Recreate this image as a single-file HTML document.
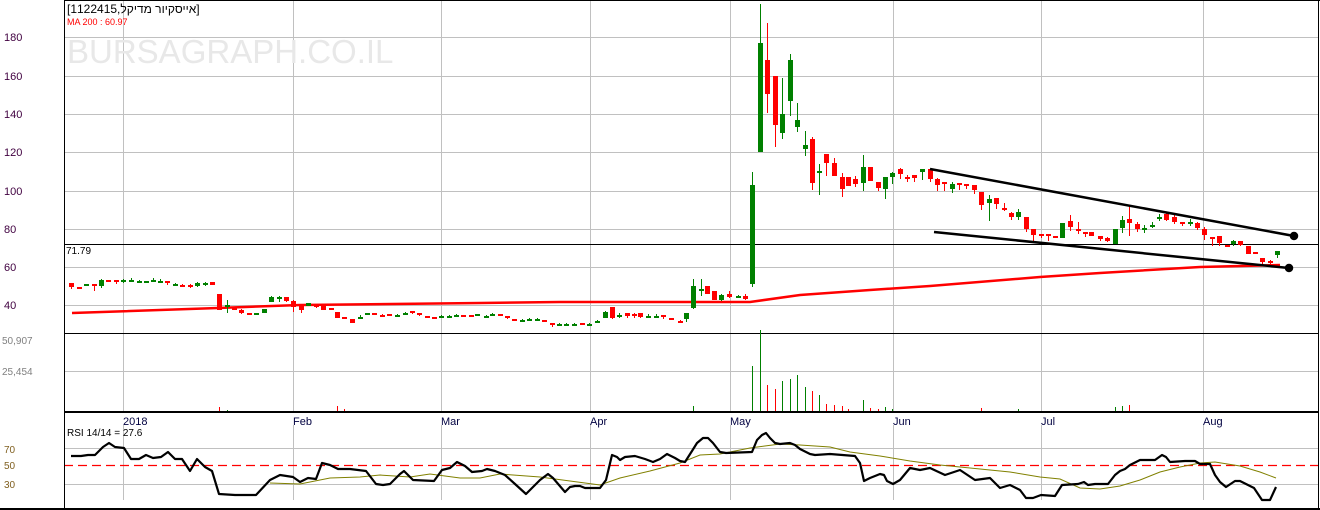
<!DOCTYPE html>
<html><head><meta charset="utf-8"><style>
html,body{margin:0;padding:0;background:#fff;width:1320px;height:510px;overflow:hidden}
svg{display:block}
text{font-family:"Liberation Sans","Noto Sans CJK JP",sans-serif}
</style></head><body>
<svg id="s" width="1320" height="510" viewBox="0 0 1320 510" xmlns="http://www.w3.org/2000/svg">
<rect width="1320" height="510" fill="#fff"/>
<g stroke="#c0c0c0" stroke-width="1">
<line x1="64" y1="37.5" x2="1318" y2="37.5"/><line x1="64" y1="76.5" x2="1318" y2="76.5"/>
<line x1="64" y1="114.5" x2="1318" y2="114.5"/><line x1="64" y1="152.5" x2="1318" y2="152.5"/>
<line x1="64" y1="191.5" x2="1318" y2="191.5"/><line x1="64" y1="229.5" x2="1318" y2="229.5"/>
<line x1="64" y1="267.5" x2="1318" y2="267.5"/><line x1="64" y1="305.5" x2="1318" y2="305.5"/>
<line x1="64" y1="371.5" x2="1318" y2="371.5"/>
<line x1="64" y1="448.5" x2="1318" y2="448.5"/><line x1="64" y1="484.5" x2="1318" y2="484.5"/>
<line x1="123.5" y1="0" x2="123.5" y2="412"/><line x1="293.5" y1="0" x2="293.5" y2="412"/>
<line x1="441.5" y1="0" x2="441.5" y2="412"/><line x1="590.5" y1="0" x2="590.5" y2="412"/>
<line x1="730.5" y1="0" x2="730.5" y2="412"/><line x1="893.5" y1="0" x2="893.5" y2="412"/>
<line x1="1041.5" y1="0" x2="1041.5" y2="412"/><line x1="1203.5" y1="0" x2="1203.5" y2="412"/>
<line x1="123.5" y1="425" x2="123.5" y2="500"/><line x1="293.5" y1="425" x2="293.5" y2="500"/>
<line x1="441.5" y1="425" x2="441.5" y2="500"/><line x1="590.5" y1="425" x2="590.5" y2="500"/>
<line x1="730.5" y1="425" x2="730.5" y2="500"/><line x1="893.5" y1="425" x2="893.5" y2="500"/>
<line x1="1041.5" y1="425" x2="1041.5" y2="500"/><line x1="1203.5" y1="425" x2="1203.5" y2="500"/>
</g>
<text x="67" y="63" font-size="33" fill="#e8e8e8">BURSAGRAPH.CO.IL</text>
<line x1="64" y1="465.5" x2="1318" y2="465.5" stroke="#ff0000" stroke-width="1.3" stroke-dasharray="9,5"/>
<g stroke="#000">
<line x1="64" y1="0.5" x2="1320" y2="0.5"/>
<line x1="64.5" y1="0" x2="64.5" y2="509"/>
<line x1="1318.5" y1="0" x2="1318.5" y2="509"/>
<line x1="64" y1="244.5" x2="1318" y2="244.5"/>
<line x1="64" y1="333.5" x2="1318" y2="333.5"/>
<line x1="64" y1="412" x2="1318" y2="412" stroke-width="2"/>
<line x1="0" y1="509" x2="1320" y2="509" stroke-width="2"/>
</g>
<polyline fill="none" stroke="#ff0000" stroke-width="2.5" points="72,313 218,308 300,305 480,303 560,302 750,302 800,295 870,290 930,286 1040,277 1100,273 1200,267 1280,265"/>
<g id="c"></g>
<g stroke="#000" stroke-width="2.5" fill="#000">
<line x1="930" y1="169" x2="1294" y2="236"/><line x1="934" y1="232" x2="1289" y2="268"/>
<circle cx="1294" cy="236" r="3"/><circle cx="1289" cy="268" r="3"/>
</g>
<polyline fill="none" stroke="#808000" stroke-width="1" points="270,483 300,484 330,478 360,477 380,475 410,477 430,474 460,478 480,478 500,474 540,477 600,485 620,478 650,471 680,463 700,455 720,454 750,448 780,444 800,445 830,447 850,452 880,456 910,461 940,465 980,469 1010,472 1040,477 1060,479 1080,488 1100,489 1120,486 1140,480 1160,472 1180,467 1200,463 1215,462 1240,466 1260,472 1276,478"/>
<polyline fill="none" stroke="#000" stroke-width="2.2" stroke-linejoin="round" points="71,456 81,456 88,455 95,455 103,447 109,443 115,447 124,448 131,459 139,459 146,455 153,458 161,457 168,452 175,459 182,459 190,471 197,459 205,467 212,471 219,494 235,495 256,495 270,480 280,475 293,477 300,482 308,478 316,479 322,463 330,465 338,469 350,469 366,471 376,484 383,485 390,484 400,474 404,471 413,480 434,481 442,470 450,468 457,462 465,466 472,472 482,471 487,469 495,471 505,475 515,484 526,494 540,480 548,474 553,478 565,492 570,487 575,486 580,486 585,488 600,488 606,480 612,455 617,457 620,460 625,457 635,456 645,459 653,462 660,459 667,454 675,458 680,461 685,462 692,451 697,443 703,438 708,438 713,443 720,452 726,453 752,452 757,440 762,435 766,433 770,438 775,443 780,444 790,443 795,445 800,449 810,454 815,455 830,454 855,456 860,463 864,481 870,478 880,474 884,475 887,481 893,484 900,480 910,468 920,470 930,468 945,475 960,470 975,480 990,478 1000,488 1010,485 1020,490 1026,498 1033,498 1041,495 1055,496 1062,485 1078,484 1084,482 1088,485 1095,484 1108,484 1115,475 1120,471 1125,469 1130,465 1140,460 1155,460 1162,455 1166,457 1170,462 1185,461 1195,461 1200,464 1210,464 1215,475 1220,482 1226,487 1235,481 1240,481 1250,486 1254,488 1262,500 1270,500 1276,487"/>
<g font-size="11" fill="#400040">
<text x="4" y="41">180</text><text x="4" y="80">160</text><text x="4" y="118">140</text><text x="4" y="156">120</text><text x="4" y="195">100</text><text x="4" y="233">80</text><text x="4" y="271">60</text><text x="4" y="309">40</text>
</g>
<g font-size="10" fill="#808080"><text x="2" y="344">50,907</text><text x="2" y="375">25,454</text></g>
<g font-size="10" fill="#806020"><text x="4" y="453">70</text><text x="4" y="469">50</text><text x="4" y="488">30</text></g>
<text x="66" y="254" font-size="10" fill="#000">71.79</text>
<g font-size="11" fill="#000040"><text x="123" y="425">2018</text><text x="293" y="425">Feb</text><text x="441" y="425">Mar</text><text x="590" y="425">Apr</text><text x="730" y="425">May</text><text x="893" y="425">Jun</text><text x="1041" y="425">Jul</text><text x="1203" y="425">Aug</text></g>
<text x="67" y="436" font-size="10" fill="#000">RSI 14/14 = 27.6</text>
<text x="67" y="13" font-size="12" fill="#000">[1122415,אייסקיור מדיקל]</text>
<text x="67" y="25" font-size="9" fill="#ff0000">MA 200 : 60.97</text>
</svg>
<script>
var D="71,283,287,283,289,r 79,287,288,287,288,r 86,284,286,284,286,g 94,284,286,284,291,r 101,280,286,279,288,g 108,280,281,280,281,r 116,280,282,280,284,r 123,280,282,279,283,g 131,280,281,278,282,g 139,281,282,280,282,g 146,281,282,281,282,g 153,280,281,278,282,g 160,281,282,279,283,g 167,281,282,281,285,r 175,284,285,283,286,g 182,285,286,284,286,r 190,285,287,284,288,r 197,283,286,282,287,g 205,283,284,282,286,g 212,282,285,282,285,r 219,294,310,294,310,r 227,305,306,300,313,g 234,308,310,307,310,r 241,310,313,309,314,r 249,313,314,313,314,r 256,313,314,313,314,g 264,309,313,309,313,g 271,297,302,296,302,g 279,297,298,296,302,g 286,297,301,297,302,r 293,301,307,300,312,r 301,305,310,304,313,r 308,303,306,303,306,g 316,305,306,305,308,r 323,306,310,306,310,r 331,308,309,308,310,r 337,312,318,312,318,r 344,317,318,317,318,r 352,319,323,319,323,r 360,317,318,315,319,g 367,313,314,313,314,g 374,313,314,313,314,r 382,315,316,314,317,r 389,314,315,314,315,r 397,315,316,314,317,g 405,313,314,312,315,g 412,311,313,311,314,r 419,313,314,313,316,r 427,316,317,316,318,r 434,317,318,317,318,r 441,316,317,315,318,g 449,316,317,315,318,g 456,315,316,314,317,g 463,315,316,315,316,r 471,315,316,315,316,r 477,314,315,314,316,g 486,316,317,315,318,g 492,314,315,313,316,g 500,314,316,314,316,r 507,316,318,316,319,r 514,319,320,319,320,r 522,320,321,319,321,g 529,319,320,318,321,g 537,319,320,318,321,g 544,320,321,320,321,r 552,323,325,323,327,r 559,324,325,323,325,g 566,324,325,323,325,g 574,324,325,323,325,g 582,323,324,323,325,r 589,324,325,323,325,g 597,321,322,320,323,g 605,312,318,311,318,g 612,307,318,307,319,r 619,315,316,313,318,g 627,313,316,313,318,r 634,314,315,313,318,r 640,313,317,313,318,r 648,316,317,314,318,g 656,316,317,314,318,g 663,315,317,315,319,r 671,318,319,318,319,r 680,321,322,320,322,r 686,313,319,313,322,g 693,286,308,279,309,g 701,289,290,279,296,g 707,286,294,286,294,r 714,291,300,291,300,r 721,295,300,294,301,g 729,294,297,291,298,r 738,296,297,295,298,g 745,296,299,294,300,r 752,185,284,172,287,g 760,43,152,4,152,g 767,60,94,23,113,r 775,76,125,76,147,r 782,114,133,78,139,g 790,60,101,54,116,g 797,120,127,103,132,g 805,145,149,131,156,g 812,139,183,137,190,r 819,171,172,164,195,g 826,154,163,154,176,r 834,163,176,158,176,r 842,177,189,173,197,r 848,177,186,177,186,r 855,179,184,176,187,r 863,167,183,155,191,g 870,167,181,167,181,r 878,182,188,182,191,r 885,177,189,177,199,g 892,173,177,172,184,g 900,169,174,168,179,r 907,177,178,175,182,r 914,175,178,175,182,r 922,169,172,169,180,g 930,169,179,169,182,r 937,179,185,178,191,r 944,182,184,182,191,r 952,184,189,182,193,g 959,183,184,183,190,r 966,184,186,184,189,r 974,185,190,185,194,r 981,192,205,192,210,r 989,199,203,195,221,g 996,198,204,198,209,r 1004,208,209,203,211,r 1011,213,217,212,220,r 1018,212,217,209,220,g 1026,217,229,217,232,r 1033,229,235,229,242,r 1041,234,235,234,238,r 1048,234,235,234,241,r 1055,236,238,236,238,r 1062,223,238,223,238,g 1070,221,227,215,231,r 1078,229,230,222,234,r 1085,232,233,232,237,r 1091,232,236,232,236,r 1100,236,239,236,241,r 1107,238,241,237,242,r 1115,229,244,229,244,g 1122,220,228,216,233,g 1129,219,223,206,236,r 1137,224,229,222,232,r 1144,228,229,225,233,g 1152,225,227,222,228,g 1159,217,218,214,221,g 1166,214,220,213,221,r 1174,217,222,215,224,r 1182,222,223,222,226,r 1190,222,223,219,226,g 1197,223,228,222,230,r 1204,229,235,227,240,r 1212,237,238,237,246,r 1219,236,243,236,246,r 1227,245,246,245,247,r 1233,241,244,240,246,g 1240,241,245,241,246,r 1248,246,254,246,254,r 1255,252,253,252,254,r 1262,258,262,258,264,r 1270,261,262,260,264,r 1277,251,255,251,258,g";
var V={685:404,693:406,702:409,708:409,722:410,752:366,760:330,767:385,775:389,782:381,790:379,797:375,805:387,812:391,819:395,826:404,834:405,842:406,848:409,856:409,863:400,870:408,878:409,885:407,892:409,219:407,227:410,337:406,344:409,1122:406,1129:405,981:408,1018:409,1115:407};
var s="",r="#ff0000",g="#008000";
D.split(" ").forEach(function(e){var a=e.split(","),x=+a[0],t=+a[1],b=+a[2],wt=+a[3],wb=+a[4],c=a[5]=="r"?r:g;if(b-t<2)b=t+2;
s+='<rect x="'+x+'" y="'+wt+'" width="1" height="'+(wb-wt)+'" fill="'+c+'"/>';
s+='<rect x="'+(x-2)+'" y="'+t+'" width="5" height="'+(b-t)+'" fill="'+c+'"/>';
var vy=V[x];if(vy)s+='<rect x="'+x+'" y="'+vy+'" width="1" height="'+(411-vy)+'" fill="'+c+'"/>';});
document.getElementById("c").innerHTML=s;
</script>
</body></html>
